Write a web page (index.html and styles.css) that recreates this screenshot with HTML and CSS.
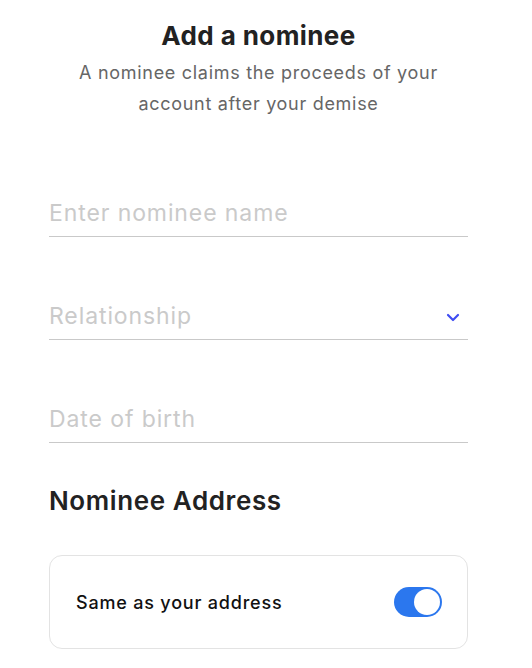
FILE: index.html
```html
<!DOCTYPE html>
<html lang="en">
<head>
<meta charset="utf-8">
<title>Add a nominee</title>
<link rel="stylesheet" href="styles.css">
</head>
<body>
<main class="page">
  <header class="head">
    <h1 class="title">Add a nominee</h1>
    <p class="subtitle">A nominee claims the proceeds of your account after your demise</p>
  </header>
  <div class="fields">
    <div class="field"><span class="placeholder">Enter nominee name</span></div>
    <div class="field"><span class="placeholder">Relationship</span>
      <svg class="chev" width="14" height="9" viewBox="0 0 14 9"><path d="M2 2 L7 7 L12 2" fill="none" stroke="#3f4df2" stroke-width="2.2" stroke-linecap="round" stroke-linejoin="round"/></svg>
    </div>
    <div class="field"><span class="placeholder">Date of birth</span></div>
  </div>
  <h2 class="section">Nominee Address</h2>
  <div class="card">
    <span class="card-label">Same as your address</span>
    <span class="toggle"><span class="knob"></span></span>
  </div>
</main>
</body>
</html>
```

FILE: styles.css
```css
* { box-sizing: border-box; }
html, body { margin: 0; padding: 0; background: #fff; }
body { font-family: "Inter", "Noto Sans", sans-serif; }
.page {
  width: 419px;
  margin-left: 49px;
  padding-top: 18px;
}
.head { text-align: center; }
.title {
  margin: 0;
  font-size: 26px;
  line-height: 36px;
  font-weight: 700;
  color: #222;
  letter-spacing: 0.4px;
}
.subtitle {
  margin: 3px auto 0;
  width: 400px;
  font-size: 18px;
  line-height: 31px;
  color: #666;
  letter-spacing: 0.7px;
}
.fields {
  margin-top: 72px;
  display: flex;
  flex-direction: column;
  gap: 57px;
}
.field {
  height: 46px;
  border-bottom: 1px solid #c9c9c9;
  display: flex;
  align-items: center;
  justify-content: space-between;
  padding-bottom: 2px;
}
.placeholder {
  font-size: 23px;
  color: #cacaca;
  letter-spacing: 0.9px;
}
.chev { margin-right: 8px; margin-top: 4px; }
.section {
  margin: 40px 0 0;
  font-size: 26px;
  line-height: 36px;
  font-weight: 600;
  color: #222;
  letter-spacing: 0.6px;
}
.card {
  margin-top: 36px;
  height: 94px;
  border: 1px solid #e3e3e3;
  border-radius: 13px;
  display: flex;
  align-items: center;
  justify-content: space-between;
  padding: 0 25px 0 26px;
}
.card-label {
  font-size: 18px;
  font-weight: 500;
  color: #111;
  letter-spacing: 0.8px;
}
.toggle {
  width: 48px;
  height: 30px;
  border-radius: 15px;
  background: #2b77ee;
  display: flex;
  align-items: center;
  justify-content: flex-end;
  padding-right: 2px;
}
.knob {
  width: 26px;
  height: 26px;
  border-radius: 50%;
  background: #fff;
}
```
